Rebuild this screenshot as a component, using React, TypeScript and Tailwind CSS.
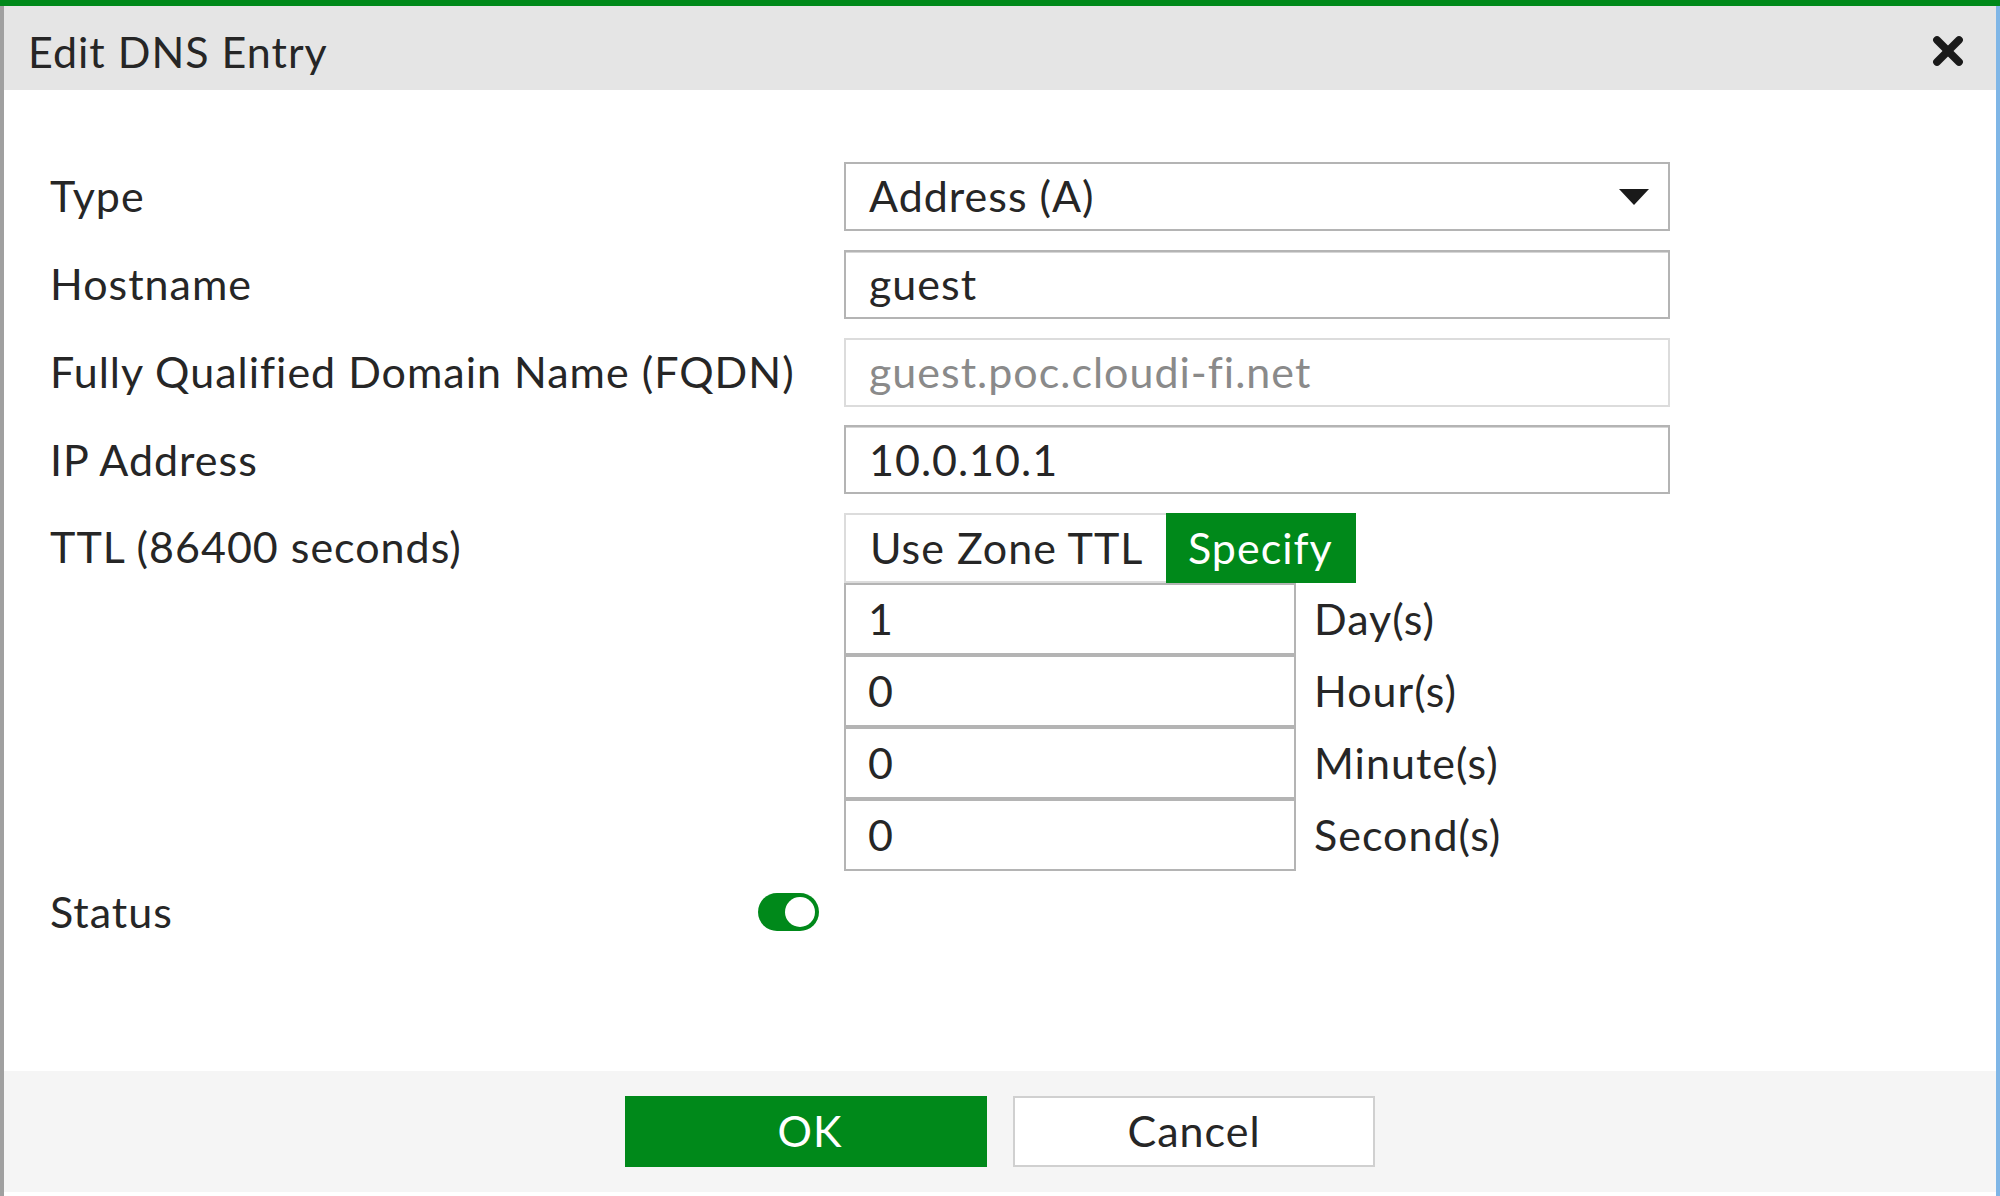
import { X } from 'lucide-react'

const font = { fontFamily: 'Lato, "Open Sans", sans-serif' }

type FieldProps = {
  label: string
  children: React.ReactNode
}

const Field = ({ label, children }: FieldProps) => {
  return (
    <div className="flex flex-row items-start">
      <div className="flex h-[69px] w-[794px] shrink-0 items-center text-[43px] tracking-[1px] text-[#262626]">
        {label}
      </div>
      {children}
    </div>
  )
}

const TextBox = ({
  value,
  muted,
}: {
  value: string
  muted?: boolean
}) => {
  return (
    <div
      className={
        muted
          ? 'flex h-[69px] w-[826px] items-center border-2 border-[#dcdcdc] bg-white pl-[23px] text-[43px] tracking-[1px] text-[#8a8a8a]'
          : 'flex h-[69px] w-[826px] items-center border-2 border-[#b4b4b4] bg-white pl-[23px] text-[43px] tracking-[1px] text-[#262626] shadow-[inset_0_1px_0_#d6d6d6]'
      }
    >
      {value}
    </div>
  )
}

const ttlParts = [
  { value: '1', unit: 'Day(s)' },
  { value: '0', unit: 'Hour(s)' },
  { value: '0', unit: 'Minute(s)' },
  { value: '0', unit: 'Second(s)' },
]

export default function App() {
  return (
    <div
      className="flex h-[1196px] w-[2000px] flex-col overflow-hidden bg-white"
      style={font}
    >
      <div className="h-[6px] w-full shrink-0 bg-[#00891a]" />
      <div className="flex flex-1 flex-col border-r-4 border-l-4 border-r-[#7fb6e6] border-l-[#a0a0a0]">
        <div className="flex h-[84px] shrink-0 flex-row items-center justify-between bg-[#e5e5e5] pr-[26px] pl-[24px]">
          <h1 className="pt-[8px] text-[43px] tracking-[1px] text-[#262626]">
            Edit DNS Entry
          </h1>
          <X
            className="mt-[6px] h-[44px] w-[44px] text-[#1a1a1a]"
            strokeWidth={4.2}
          />
        </div>

        <div className="flex flex-1 flex-col gap-[18.75px] pt-[72px] pl-[46px]">
          <Field label="Type">
            <div className="flex h-[69px] w-[826px] flex-row items-center justify-between border-2 border-[#b4b4b4] bg-white pr-[18px] pl-[23px] text-[43px] tracking-[1px] text-[#262626]">
              <span>Address (A)</span>
              <svg width="32" height="18" viewBox="0 0 32 18">
                <path d="M1 1 H31 L16 17 Z" fill="#1a1a1a" />
              </svg>
            </div>
          </Field>
          <Field label="Hostname">
            <TextBox value="guest" />
          </Field>
          <Field label="Fully Qualified Domain Name (FQDN)">
            <TextBox value="guest.poc.cloudi-fi.net" muted />
          </Field>
          <Field label="IP Address">
            <TextBox value="10.0.10.1" />
          </Field>
          <Field label="TTL (86400 seconds)">
            <div className="flex flex-col">
              <div className="flex h-[70px] flex-row">
                <div className="flex w-[322px] items-center border-2 border-r-0 border-[#dcdcdc] bg-white pl-[24px] text-[43px] tracking-[1px] text-[#262626]">
                  Use Zone TTL
                </div>
                <div className="flex w-[190px] items-center bg-[#00891a] pl-[22px] text-[43px] tracking-[1px] text-white">
                  Specify
                </div>
              </div>
              {ttlParts.map((part) => (
                <div key={part.unit} className="flex flex-row items-center">
                  <div className="flex h-[72px] w-[452px] items-center border-2 border-[#b4b4b4] bg-white pl-[22px] text-[43px] tracking-[1px] text-[#262626]">
                    {part.value}
                  </div>
                  <span className="pl-[18px] text-[43px] tracking-[1px] text-[#262626]">
                    {part.unit}
                  </span>
                </div>
              ))}
            </div>
          </Field>
          <div className="flex h-[44px] w-[794px] flex-row items-center justify-between pr-[25px] text-[43px] tracking-[1px] text-[#262626]">
            <span>Status</span>
            <div className="flex h-[38px] w-[61px] items-center justify-end rounded-full bg-[#00891a] pr-[4px]">
              <div className="h-[30px] w-[30px] rounded-full bg-white" />
            </div>
          </div>
        </div>

        <div className="flex h-[121px] shrink-0 flex-row justify-center gap-[26px] bg-[#f5f5f5] pt-[25px]">
          <button className="h-[71px] w-[362px] bg-[#00891a] pl-[8px] text-[43px] tracking-[1px] text-white">
            OK
          </button>
          <button className="h-[71px] w-[362px] border-2 border-[#d0d0d0] bg-white text-[43px] tracking-[1px] text-[#262626]">
            Cancel
          </button>
        </div>
        <div className="h-[4px] shrink-0 bg-white" />
      </div>
    </div>
  )
}
